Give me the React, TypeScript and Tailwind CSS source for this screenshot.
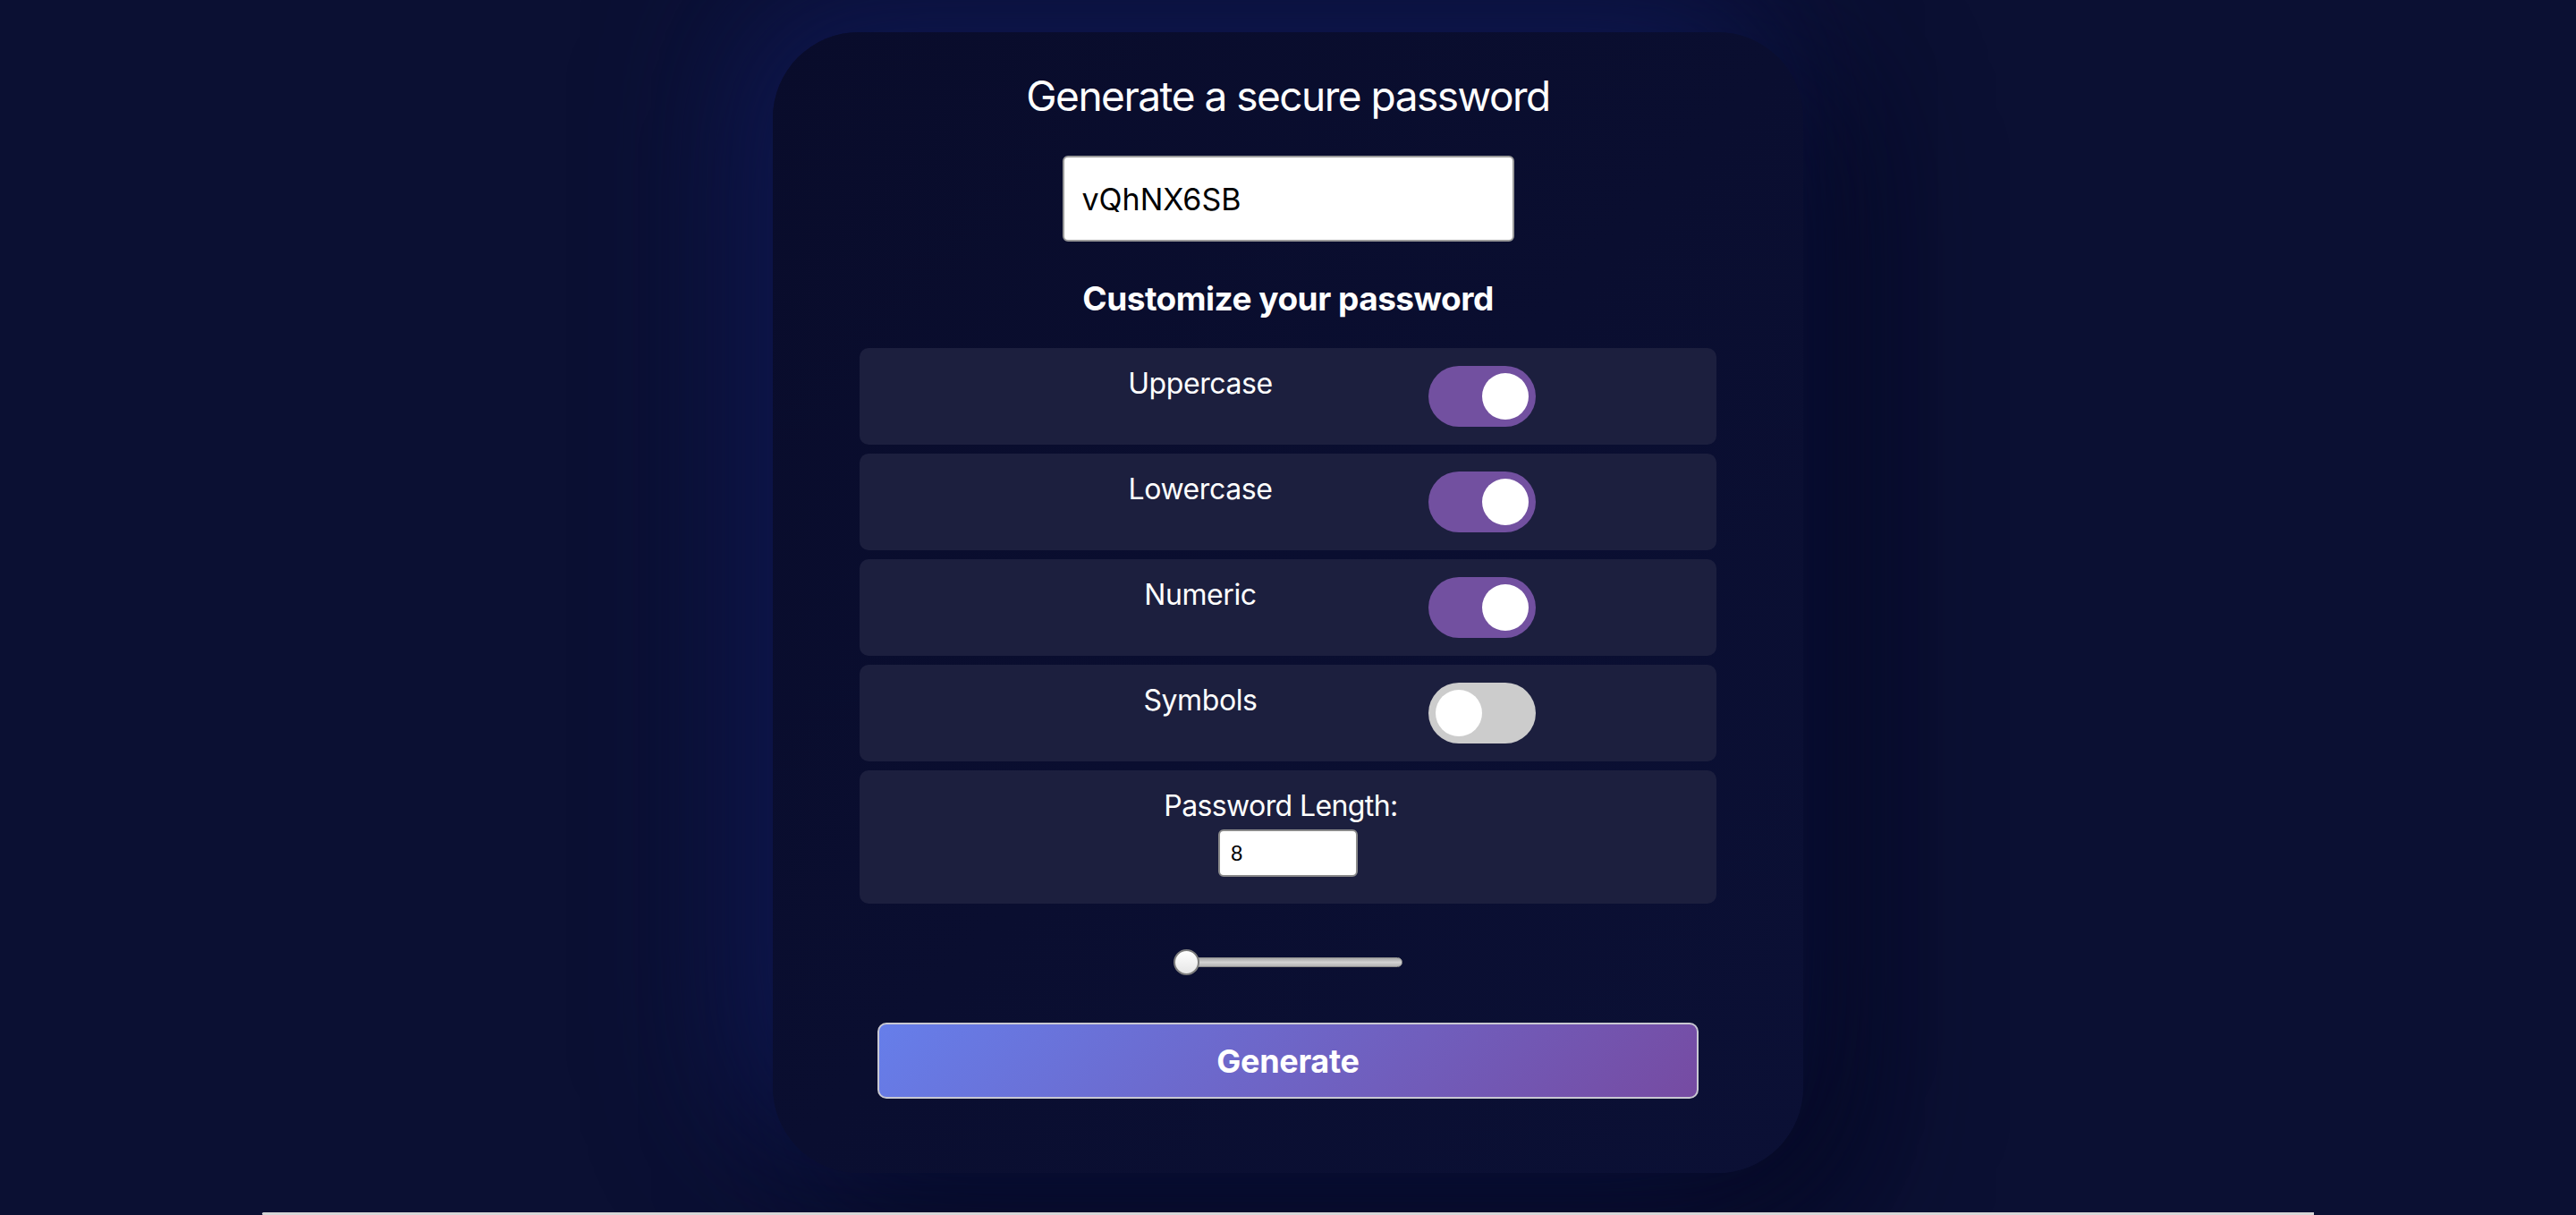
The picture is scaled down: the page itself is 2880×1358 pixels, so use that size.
import { useState } from 'react'

const options = [
  { label: 'Uppercase', on: true },
  { label: 'Lowercase', on: true },
  { label: 'Numeric', on: true },
  { label: 'Symbols', on: false },
]

function Toggle({ on }: { on: boolean }) {
  return (
    <div
      className={`flex h-[68px] w-[120px] shrink-0 items-center rounded-full px-[8px] ${
        on ? 'justify-end bg-[#7250a0]' : 'justify-start bg-[#cccccc]'
      }`}
    >
      <div className="h-[52px] w-[52px] rounded-full bg-white" />
    </div>
  )
}

export default function App() {
  const [password] = useState('vQhNX6SB')
  const [length] = useState(8)

  return (
    <div className="flex h-[1358px] flex-col overflow-hidden bg-[#0b1033] font-['Inter',sans-serif]">
      <div className="flex-1 pt-[36px]">
        <div className="mx-auto w-[1152px] rounded-[96px] bg-gradient-to-br from-[#090c2b] to-[#0b1035] px-[97px] pb-[83px] pt-[42px] shadow-[-40px_-40px_160px_#0f1853,40px_40px_160px_#03051a]">
          <h2 className="text-center text-[46px] font-normal leading-[58px] tracking-[-1.5px] text-white">
            Generate a secure password
          </h2>

          <div className="mt-[38px] flex justify-center">
            <input
              readOnly
              value={password}
              className="h-[96px] w-[505px] rounded-[6px] border-2 border-[#9a9a9a] bg-white pl-[20px] font-['Inter',sans-serif] text-[34px] text-black outline-none"
            />
          </div>

          <h3 className="mt-[40px] text-center text-[37px] font-bold leading-[48px] tracking-[-0.5px] text-white">
            Customize your password
          </h3>

          <div className="mt-[31px] flex flex-col gap-[10px]">
            {options.map((opt) => (
              <div
                key={opt.label}
                className="flex h-[108px] items-start rounded-[10px] bg-[#1c1f3e] pl-[261px] pt-[20px]"
              >
                <span className="w-[240px] text-center text-[32px] leading-[39px] tracking-[-0.4px] text-white">
                  {opt.label}
                </span>
                <div className="ml-[135px]">
                  <Toggle on={opt.on} />
                </div>
              </div>
            ))}

            <div className="flex h-[149px] flex-col items-center rounded-[10px] bg-[#1c1f3e] pt-[20px]">
              <span className="pr-[16px] text-[32px] leading-[39px] tracking-[-0.6px] text-white">
                Password Length:
              </span>
              <input
                readOnly
                value={length}
                className="mt-[7px] h-[53px] w-[156px] rounded-[6px] border-2 border-[#8a8a8a] bg-white pl-[12px] font-['Liberation_Sans',sans-serif] text-[24px] text-black outline-none"
              />
            </div>
          </div>

          <div className="mt-[51px] flex justify-center">
            <div className="relative h-[29px] w-[256px]">
              <div className="absolute left-[2px] right-0 top-[9px] h-[11px] rounded-full border border-[#8c8c8c] bg-gradient-to-b from-[#a8a8a8] via-[#d2d2d2] to-[#b4b4b4]" />
              <div className="absolute left-0 top-0 h-[29px] w-[29px] rounded-full border-2 border-[#7d7d7d] bg-gradient-to-b from-white to-[#e6e6e6]" />
            </div>
          </div>

          <button className="mx-[20px] mt-[53px] flex h-[85px] w-[918px] items-center justify-center rounded-[10px] border-2 border-[#c8c8d2] bg-[linear-gradient(135deg,#667eea,#764ba2)] text-[36px] font-bold tracking-[-0.3px] text-white">
            Generate
          </button>
        </div>
      </div>
      <div className="ml-[293px] h-[3px] w-[2294px] rounded-l-full bg-[#d6d6d6]" />
    </div>
  )
}
